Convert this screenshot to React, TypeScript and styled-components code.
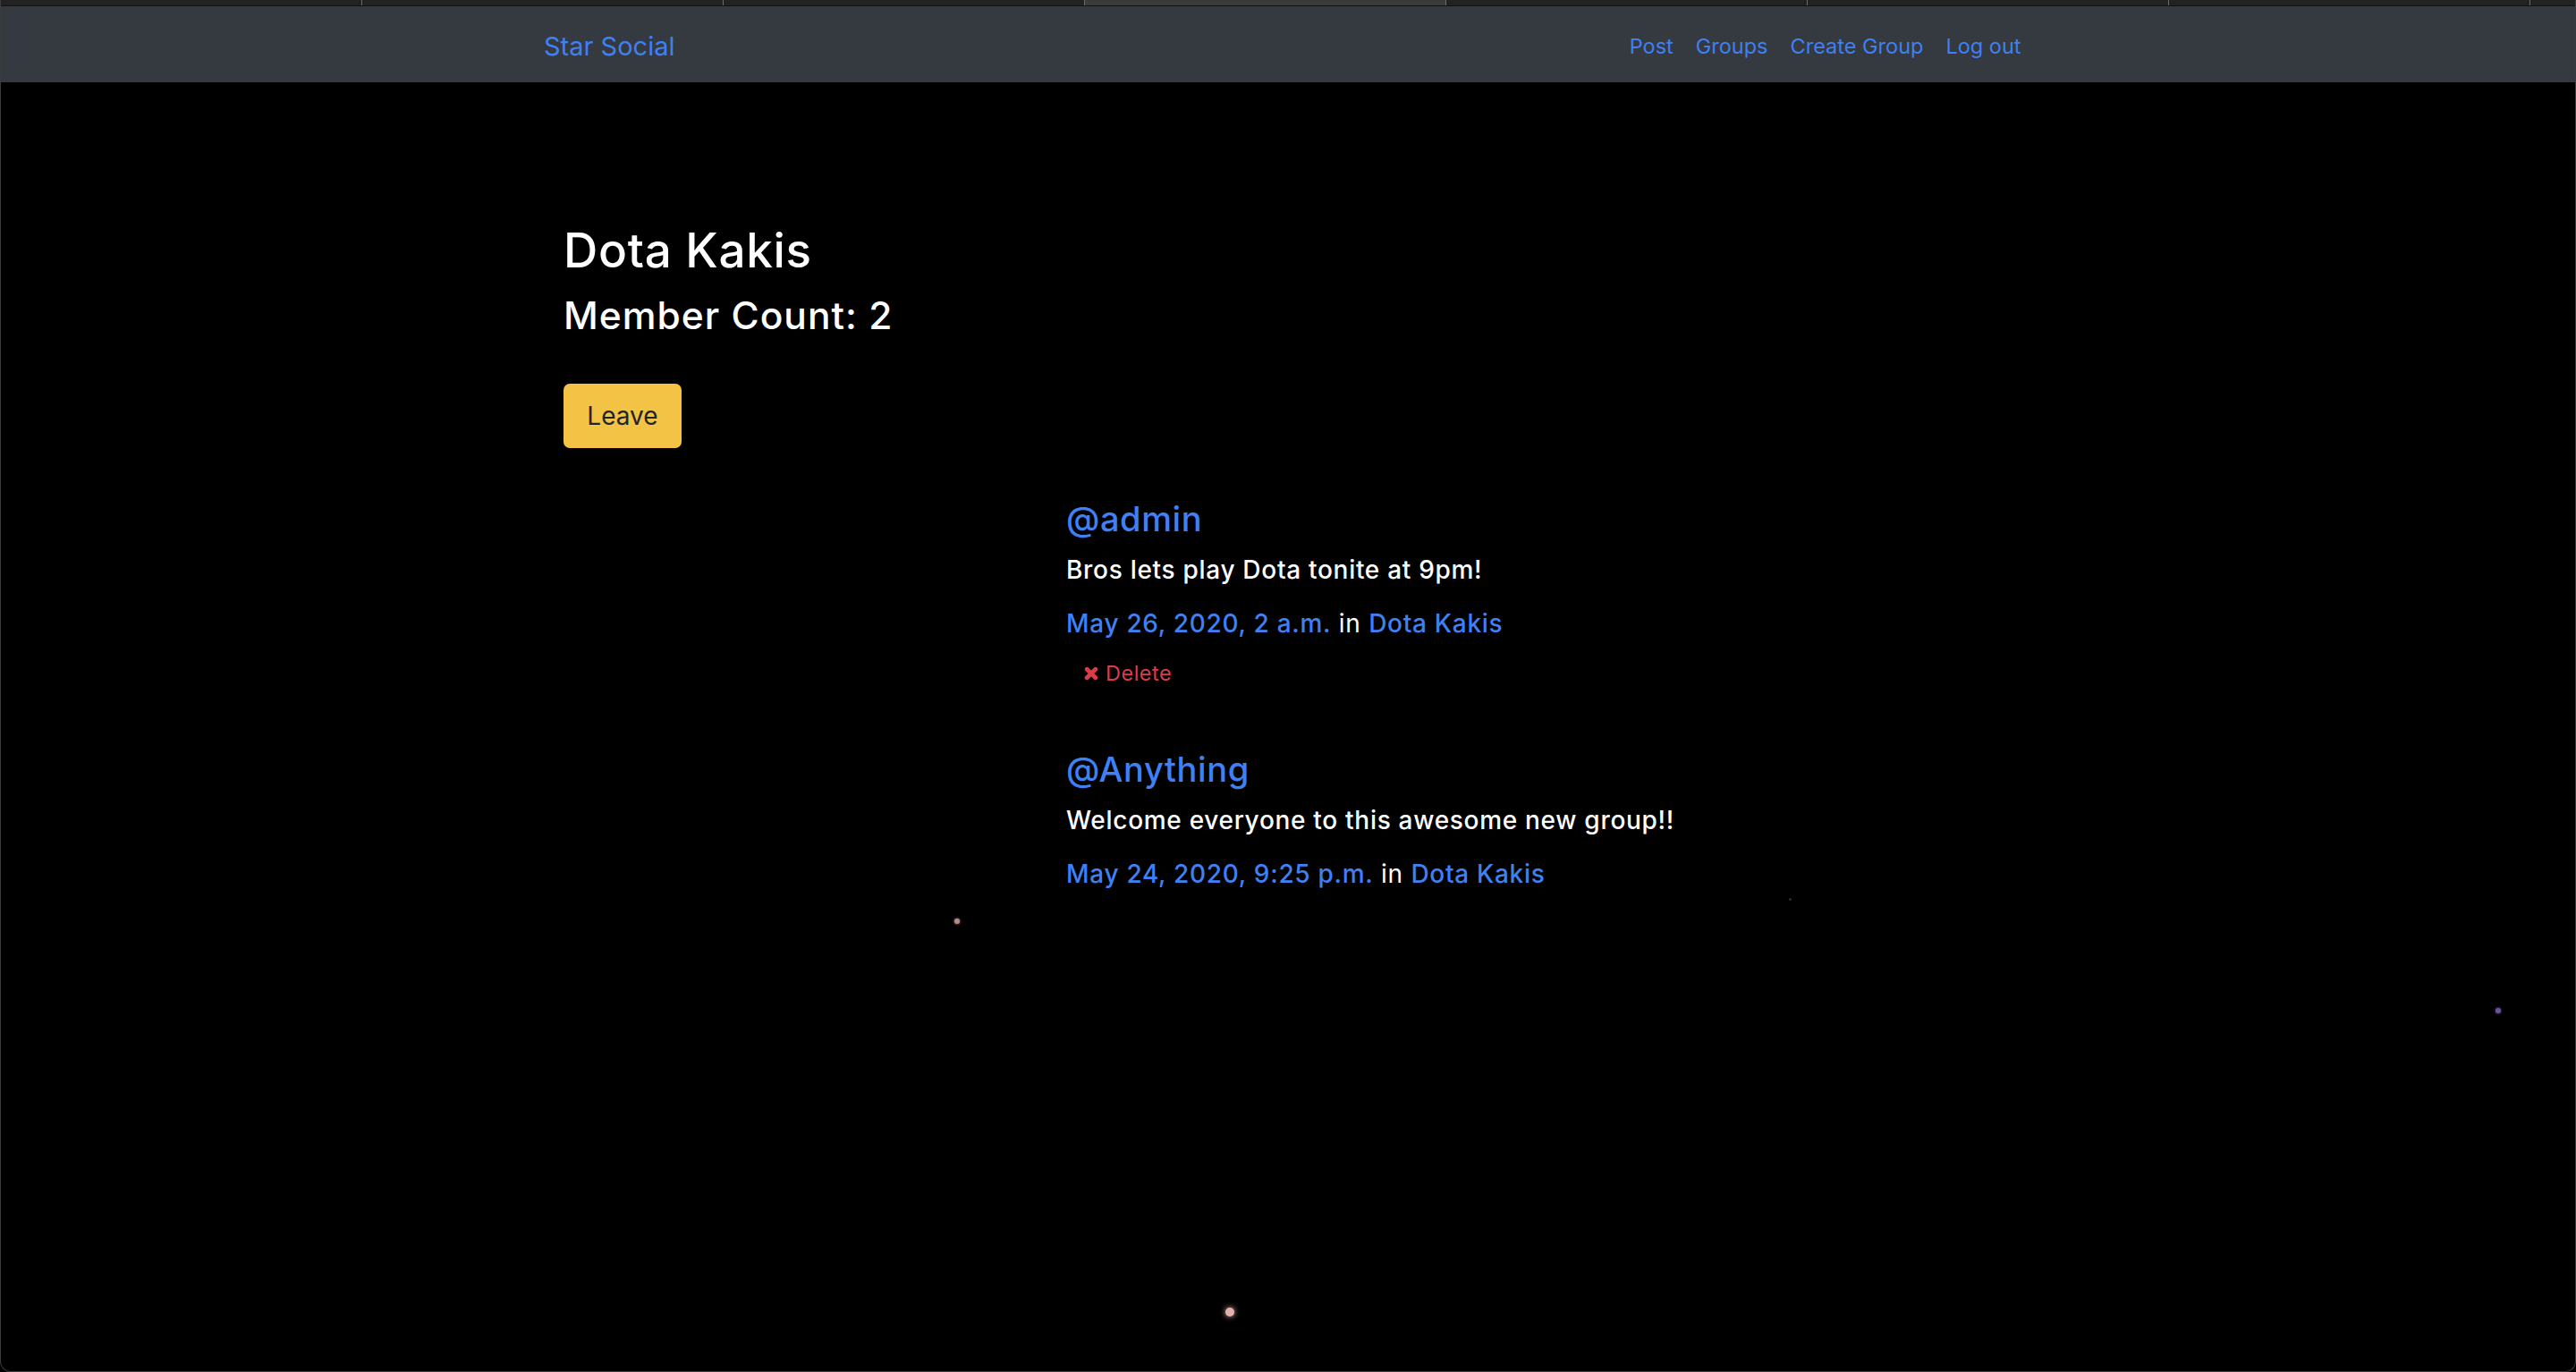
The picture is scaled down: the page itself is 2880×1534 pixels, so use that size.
import React from "react";
import styled, { createGlobalStyle } from "styled-components";

const GlobalStyle = createGlobalStyle`
  html, body {
    margin: 0;
    padding: 0;
    background: #000;
  }
  body {
    font-family: Inter, "Noto Sans", "Liberation Sans", sans-serif;
    color: #fff;
  }
`;

const posts = [
  {
    user: "admin",
    message: "Bros lets play Dota tonite at 9pm!",
    date: "May 26, 2020, 2 a.m.",
    group: "Dota Kakis",
    canDelete: true,
  },
  {
    user: "Anything",
    message: "Welcome everyone to this awesome new group!!",
    date: "May 24, 2020, 9:25 p.m.",
    group: "Dota Kakis",
    canDelete: false,
  },
];

const stars = [
  { x: 1066, y: 1027, size: 6, color: "#b48c82", glow: 3 },
  { x: 1369, y: 1462, size: 10, color: "#e2b3aa", glow: 6 },
  { x: 2789, y: 1127, size: 6, color: "#6c5597", glow: 3 },
  { x: 1999, y: 1004, size: 3, color: "#2c2c2c", glow: 0 },
];

export default function App() {
  return (
    <>
      <GlobalStyle />
      <Frame>
        <TabStrip>
          {Array.from({ length: 7 }).map((_, i) => (
            <Tab key={i} $active={i === 3} />
          ))}
        </TabStrip>
        <Navbar>
          <NavInner>
            <Brand href="#">Star Social</Brand>
            <NavLinks>
              <NavLink href="#">Post</NavLink>
              <NavLink href="#">Groups</NavLink>
              <NavLink href="#">Create Group</NavLink>
              <NavLink href="#">Log out</NavLink>
            </NavLinks>
          </NavInner>
        </Navbar>

        <Main>
          <GroupTitle>Dota Kakis</GroupTitle>
          <MemberCount>Member Count: 2</MemberCount>
          <LeaveButton>Leave</LeaveButton>

          <PostGrid>
            <div />
            <PostList>
              {posts.map((p) => (
                <Post key={p.user}>
                  <Username href="#">@{p.user}</Username>
                  <Message>{p.message}</Message>
                  <Meta>
                    <MetaLink href="#">{p.date}</MetaLink> in{" "}
                    <MetaLink href="#">{p.group}</MetaLink>
                  </Meta>
                  {p.canDelete && (
                    <DeleteLink href="#">
                      <svg width="16" height="16" viewBox="0 0 12 12">
                        <path
                          d="M2.4 2.4 L9.6 9.6 M9.6 2.4 L2.4 9.6"
                          stroke="#dc3c49"
                          strokeWidth="3.6"
                          strokeLinecap="round"
                        />
                      </svg>
                      Delete
                    </DeleteLink>
                  )}
                </Post>
              ))}
            </PostList>
          </PostGrid>
        </Main>

        {/* starfield background */}
        {stars.map((s, i) => (
          <Star
            key={i}
            $size={s.size}
            $color={s.color}
            $glow={s.glow}
            style={{ left: s.x, top: s.y }}
          />
        ))}
      </Frame>
    </>
  );
}

const Frame = styled.div`
  position: relative;
  box-sizing: border-box;
  width: 2880px;
  height: 1534px;
  overflow: hidden;
  background: #000;
  border: 1px solid #3c3c3c;
  border-top: none;
  border-radius: 0 0 12px 12px;
`;

const TabStrip = styled.div`
  display: flex;
  height: 6px;
  background: #222;
  border-bottom: 1px solid #111;
`;

const Tab = styled.div<{ $active?: boolean }>`
  flex: 0 0 404px;
  box-sizing: border-box;
  border-right: 1px solid #6a6a6a;
  background: ${(p) => (p.$active ? "#3b3b3b" : "#222")};
`;

const Navbar = styled.nav`
  height: 85px;
  background: #343a40;
  display: flex;
  align-items: center;
`;

const NavInner = styled.div`
  width: 1664px;
  margin: 0 auto;
  display: flex;
  align-items: center;
  justify-content: space-between;
  padding-top: 4px;
`;

const Brand = styled.a`
  color: #3f80f2;
  text-decoration: none;
  font-size: 29px;
  line-height: 40px;
`;

const NavLinks = styled.div`
  display: flex;
  align-items: center;
`;

const NavLink = styled.a`
  color: #3f80f2;
  text-decoration: none;
  font-size: 23.5px;
  line-height: 32px;
  padding: 0 12.5px;
`;

const Main = styled.main`
  width: 1620px;
  margin: 0 auto;
  padding-top: 157px;
`;

const GroupTitle = styled.h2`
  margin: 0;
  font-size: 53px;
  font-weight: 500;
  line-height: 62px;
  letter-spacing: 0.7px;
`;

const MemberCount = styled.h4`
  margin: 18px 0 0;
  font-size: 42.5px;
  font-weight: 500;
  line-height: 48px;
  letter-spacing: 1px;
`;

const LeaveButton = styled.button`
  display: block;
  margin-top: 52px;
  width: 132px;
  height: 72px;
  padding: 0;
  border: none;
  border-radius: 7px;
  background: #f2c344;
  color: #212529;
  font-family: inherit;
  font-size: 28px;
  cursor: pointer;
`;

const PostGrid = styled.div`
  display: grid;
  grid-template-columns: 562px 1fr;
  margin-top: 57px;
`;

const PostList = styled.div`
  display: flex;
  flex-direction: column;
  gap: 72px;
`;

const Post = styled.div`
  display: flex;
  flex-direction: column;
`;

const Username = styled.a`
  color: #3f80f2;
  text-decoration: none;
  font-size: 38px;
  font-weight: 500;
  line-height: 44px;
  letter-spacing: 0.6px;
`;

const Message = styled.h6`
  margin: 20px 0 0;
  font-size: 28px;
  font-weight: 500;
  line-height: 30px;
  letter-spacing: 0.7px;
`;

const Meta = styled.div`
  margin-top: 30px;
  font-size: 28px;
  line-height: 30px;
  letter-spacing: 0.7px;
  color: #fff;
`;

const MetaLink = styled.a`
  color: #3f80f2;
  text-decoration: none;
  font-weight: 500;
`;

const DeleteLink = styled.a`
  display: inline-flex;
  align-items: center;
  gap: 8px;
  align-self: flex-start;
  margin: 28px 0 0 20px;
  color: #dc3c49;
  text-decoration: none;
  font-size: 23.5px;
  line-height: 26px;
  letter-spacing: 0.5px;
`;

const Star = styled.span<{ $size: number; $color: string; $glow: number }>`
  position: absolute;
  width: ${(p) => p.$size}px;
  height: ${(p) => p.$size}px;
  border-radius: 50%;
  background: ${(p) => p.$color};
  box-shadow: 0 0 ${(p) => p.$glow}px ${(p) => p.$color};
`;
